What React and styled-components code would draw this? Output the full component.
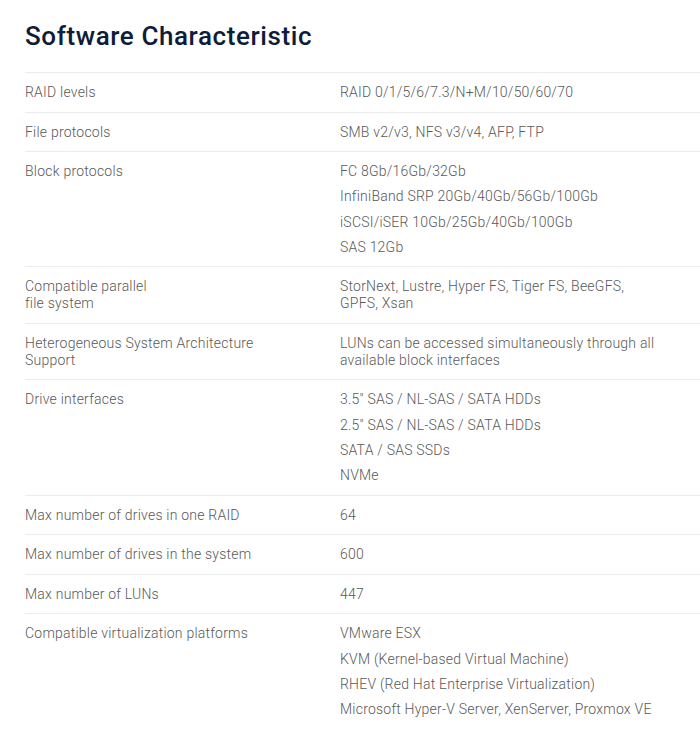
import styled, { createGlobalStyle } from "styled-components";

const GlobalStyle = createGlobalStyle`
  body {
    margin: 0;
    background: #fff;
    font-family: Roboto, "Liberation Sans", sans-serif;
  }
`;

const Section = styled.section`
  padding: 20px 0 0 25px;
`;

const Title = styled.h2`
  margin: 0 0 20px;
  font-size: 26px;
  font-weight: 500;
  line-height: 32px;
  letter-spacing: 0.6px;
  color: #0f1c38;
`;

const Table = styled.div`
  display: flex;
  flex-direction: column;
`;

const Row = styled.div`
  display: grid;
  grid-template-columns: 315px 1fr;
  padding: 11px 40px 10.5px 0;
  border-top: 1px solid #ececec;
  font-size: 14px;
  font-weight: 300;
  line-height: 17px;
  letter-spacing: 0.22px;
  color: #595959;
`;

const Label = styled.div`
  padding-right: 40px;
`;

const Values = styled.div`
  display: flex;
  flex-direction: column;
  gap: 8.3px;
`;

const specs = [
  { label: "RAID levels", values: ["RAID 0/1/5/6/7.3/N+M/10/50/60/70"] },
  { label: "File protocols", values: ["SMB v2/v3, NFS v3/v4, AFP, FTP"] },
  {
    label: "Block protocols",
    values: [
      "FC 8Gb/16Gb/32Gb",
      "InfiniBand SRP 20Gb/40Gb/56Gb/100Gb",
      "iSCSI/iSER 10Gb/25Gb/40Gb/100Gb",
      "SAS 12Gb",
    ],
  },
  {
    label: (
      <>
        Compatible parallel
        <br />
        file system
      </>
    ),
    values: ["StorNext, Lustre, Hyper FS, Tiger FS, BeeGFS, GPFS, Xsan"],
  },
  {
    label: "Heterogeneous System Architecture Support",
    values: ["LUNs can be accessed simultaneously through all available block interfaces"],
  },
  {
    label: "Drive interfaces",
    values: [
      '3.5" SAS / NL-SAS / SATA HDDs',
      '2.5" SAS / NL-SAS / SATA HDDs',
      "SATA / SAS SSDs",
      "NVMe",
    ],
  },
  { label: "Max number of drives in one RAID", values: ["64"] },
  { label: "Max number of drives in the system", values: ["600"] },
  { label: "Max number of LUNs", values: ["447"] },
  {
    label: "Compatible virtualization platforms",
    values: [
      "VMware ESX",
      "KVM (Kernel-based Virtual Machine)",
      "RHEV (Red Hat Enterprise Virtualization)",
      "Microsoft Hyper-V Server, XenServer, Proxmox VE",
    ],
  },
];

const App = () => {
  return (
    <>
      <GlobalStyle />
      <Section>
        <Title>Software Characteristic</Title>
        <Table>
          {specs.map((s, i) => (
            <Row key={i}>
              <Label>{s.label}</Label>
              <Values>
                {s.values.map((v) => (
                  <div key={v}>{v}</div>
                ))}
              </Values>
            </Row>
          ))}
        </Table>
      </Section>
    </>
  );
};

export default App;
